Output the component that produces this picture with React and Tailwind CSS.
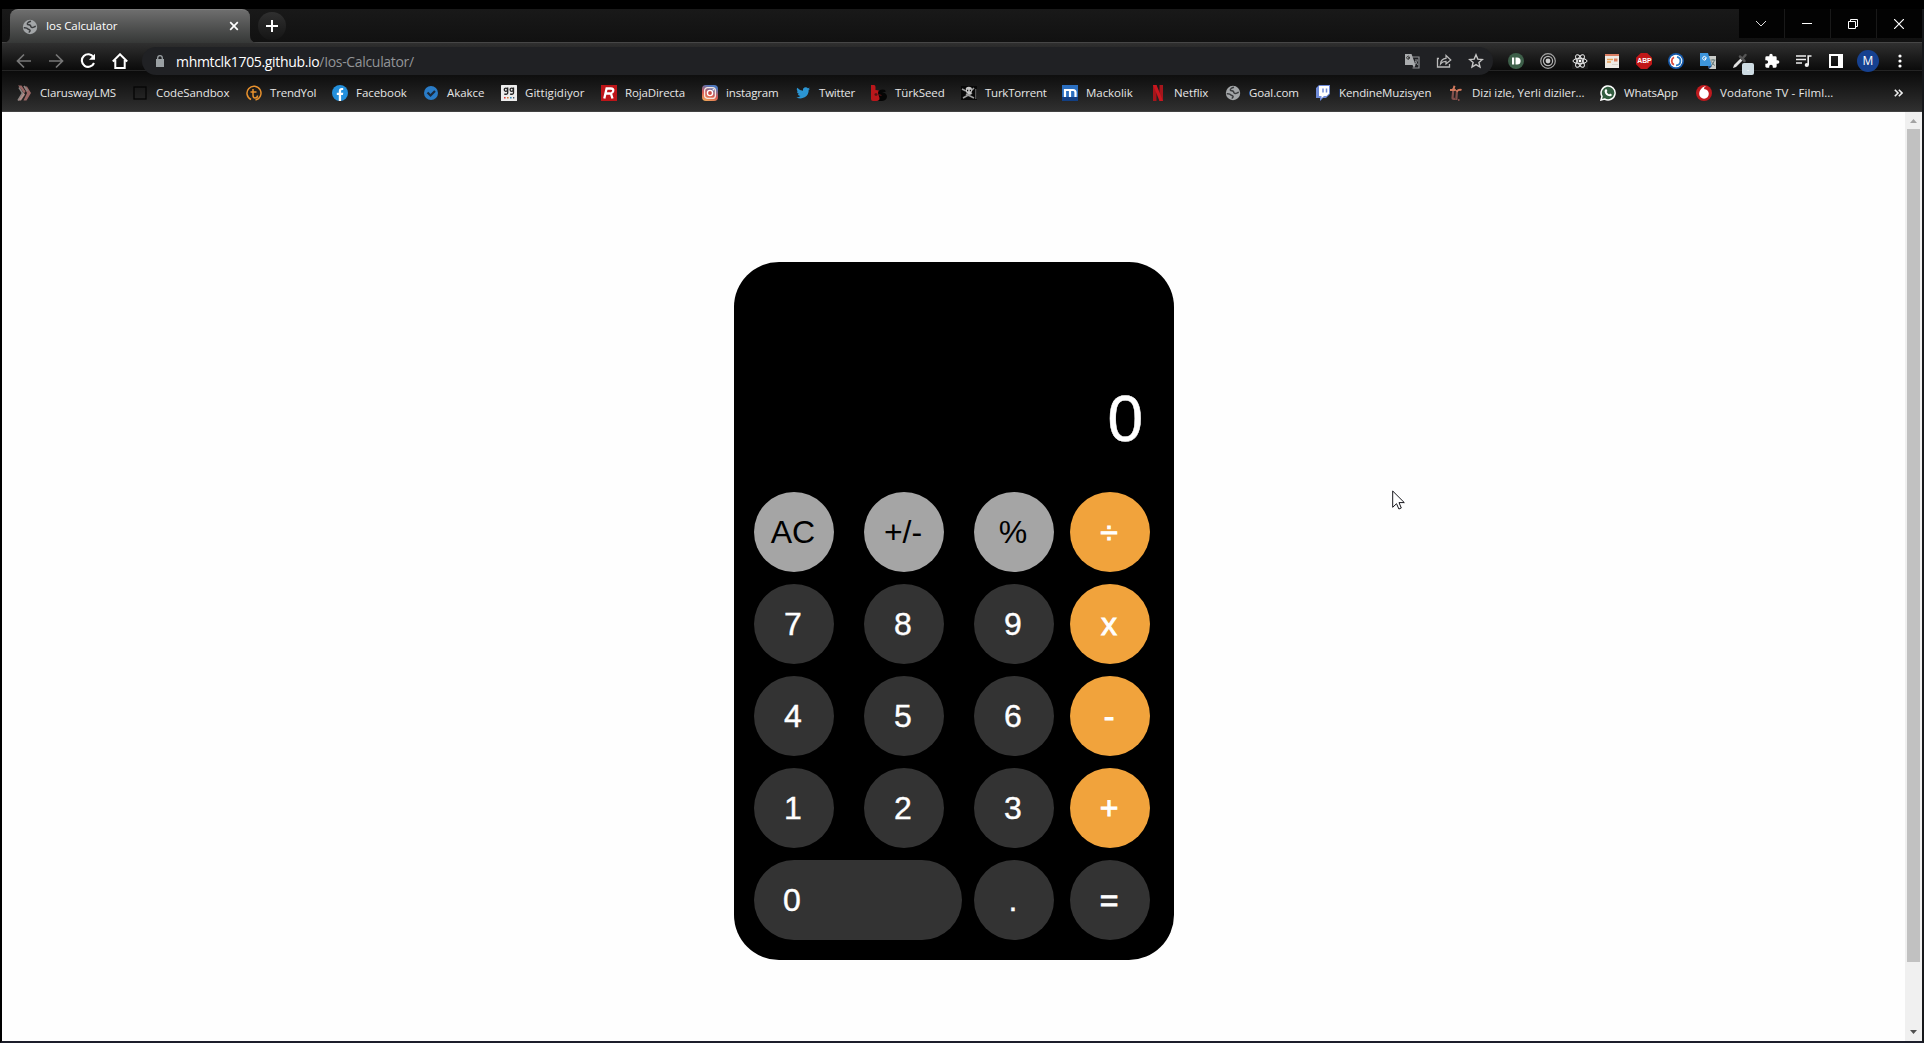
import React from "react";

const UI = "font-['Open_Sans','Noto_Sans',sans-serif]";

function Svg({ size = 16, box = 16, children, className = "" }) {
  return (
    <svg width={size} height={size} viewBox={`0 0 ${box} ${box}`} fill="none" className={`block shrink-0 ${className}`}>
      {children}
    </svg>
  );
}

const Globe = ({ size = 16 }) => (
  <Svg size={size}>
    <circle cx="8" cy="8" r="7.2" fill="#a3a6a8" />
    <path d="M1.800 8.800c2.500-.3 3.400.2 4.200 1.200.6.800 2 .4 2.100 1.600.1.900-.8 1-1 2M9 2.200C6.500 2.800 5 4 5.400 5.200c.4.900 2.300.4 3 1.300.7.900.2 1.800 1.700 2 1.500.2 2.200-.9 3.700-1.300" stroke="#3a3c3e" strokeWidth="1.500" />
  </Svg>
);

const icons = {
  clarus: (
    <Svg>
      <path d="M2 0.500h3.500l4 6-1.500 2L5 4z M7.500 1.500h3.500l4 6.500-4.500 7.500H7.500L11 8z" fill="#9a6664" />
      <path d="M2 15.500L6.500 8 3 2.500 M8 1l3.500 5" stroke="#8c8583" strokeWidth="1.500" />
      <path d="M2.500 15.500h2.500l4-6-1.500-2z" fill="#b18d89" />
    </Svg>
  ),
  box: <Svg><rect x="2" y="2" width="12" height="12" stroke="#050505" strokeWidth="1.300" /></Svg>,
  trend: (
    <Svg>
      <path d="M5 14.500a7 7 0 1 1 4.500.500" stroke="#e8912d" strokeWidth="1.500" />
      <path d="M7 4v6q0 3 2 3 2.500 0 2.500-2.500M4.500 7h6" stroke="#e8912d" strokeWidth="1.500" />
    </Svg>
  ),
  facebook: (
    <Svg>
      <circle cx="8" cy="8" r="8" fill="#2490dc" />
      <path d="M6.800 16V10H4.800V7.700h2V6.200c0-2.100 1.200-3.100 3-3.100.700 0 1.400.1 1.400.1v1.900h-.9c-.9 0-1.200.500-1.200 1.200v1.400h2.200L10.900 10H9.100v6z" fill="#fff" />
    </Svg>
  ),
  akakce: (
    <Svg>
      <circle cx="8" cy="8" r="7" fill="#2a7cc7" />
      <path d="M4.500 7.500l3 3 4.500-4.500" stroke="#1c2a3c" strokeWidth="2.200" />
    </Svg>
  ),
  gitti: (
    <Svg>
      <rect width="16" height="16" rx="0.500" fill="#ececec" />
      <g stroke="#222" strokeWidth="1.300">
        <circle cx="4.900" cy="4.700" r="1.600" /><path d="M6.700 2.500v5.500q0 1.700-3.500 1.100" />
        <circle cx="10.700" cy="4.700" r="1.600" /><path d="M12.500 2.500v5.500q0 1.700-3.500 1.100" />
      </g>
      <path d="M3 12h1.600v1.600H3z" fill="#d33" /><path d="M6 12h1.600v1.600H6z" fill="#c73" />
      <path d="M9 12h1.600v1.600H9z" fill="#38b" /><path d="M12 12h1.300v1.600H12z" fill="#456" />
    </Svg>
  ),
  roja: (
    <Svg>
      <rect width="16" height="16" fill="#bd1519" />
      <path d="M3.300 13.500L5.600 3.500h4.200q3 0 2.400 2.500-.5 2-2.300 2.300l1.600 5.200M5 8.500h4" stroke="#fff" strokeWidth="2.300" />
    </Svg>
  ),
  insta: (
    <Svg>
      <defs>
        <linearGradient id="ig" x1="0" y1="1" x2="0.400" y2="0">
          <stop offset="0" stopColor="#f3b75d" /><stop offset="0.500" stopColor="#d6564f" /><stop offset="1" stopColor="#4f78bd" />
        </linearGradient>
      </defs>
      <rect width="16" height="16" rx="4" fill="url(#ig)" />
      <rect x="2.600" y="2.600" width="10.800" height="10.800" rx="3" stroke="#f5e6e0" strokeWidth="1.300" />
      <circle cx="8" cy="8" r="2.600" fill="#cd4b45" stroke="#fff" strokeWidth="1.400" />
      <circle cx="11.300" cy="4.700" r="0.800" fill="#fff" />
    </Svg>
  ),
  twitter: (
    <Svg box={24}>
      <path d="M22.500 5.500a9 9 0 0 1-2.400.7 4.200 4.200 0 0 0 1.800-2.300 8 8 0 0 1-2.600 1A4.200 4.200 0 0 0 12 8.700 12 12 0 0 1 3.400 4.300a4.200 4.200 0 0 0 1.300 5.600 4 4 0 0 1-1.900-.5 4.200 4.200 0 0 0 3.300 4.100 4 4 0 0 1-1.900.1 4.200 4.200 0 0 0 3.900 2.900 8.400 8.400 0 0 1-6.100 1.700A12 12 0 0 0 20.500 7.600a8 8 0 0 0 2-2.100z" fill="#2b95d3" />
    </Svg>
  ),
  turkseed: (
    <Svg>
      <path d="M0 0h3q1.500 0 1.500 2v3q4 0 6 3v4q-1 3-5 4H2q-2 0-2-2z" fill="#ba171b" />
      <path d="M7 8q0-3.500 5-3.500 3 0 2.500 2.500l-3.500 0q4.500 1 5 4 0 4.500-5 5H7q2-1 1.500-3z" fill="#050505" />
      <path d="M3.500 9.500h3M5 8v3M7.500 9.500l3 1" stroke="#531214" strokeWidth="1.300" />
    </Svg>
  ),
  pirate: (
    <Svg>
      <rect width="16" height="14" y="1" fill="#080808" />
      <path d="M1 4l4 2M2 13l9-5M13 3L10 6M5 9l8 4" stroke="#9b9b9b" strokeWidth="1.600" />
      <path d="M4.800 3q3-2.500 6 0v3.500L9.800 9h-3L5 7z" fill="#c6c6c6" />
      <path d="M6 5.500h1.200M8.800 5.500H10" stroke="#111" strokeWidth="1.400" />
      <path d="M14.800 4v10" stroke="#777" />
    </Svg>
  ),
  mackolik: (
    <Svg>
      <rect width="16" height="16" fill="#2b6fc0" /><rect y="12" width="16" height="4" fill="#123f83" />
      <path d="M3 12V5h8q2.500 0 2.500 2.500V12M8 5v7" stroke="#fff" strokeWidth="2.200" />
    </Svg>
  ),
  netflix: (
    <Svg>
      <path d="M3 0h3.500v16H3zM9.500 0H13v16H9.500z" fill="#a5151b" />
      <path d="M3 0h3.500L13 16H9.500z" fill="#c9171f" />
    </Svg>
  ),
  globe: <Globe />,
  twitch: (
    <Svg>
      <path d="M1 3l3-3h11v9l-4 4H8l-3 3v-3H1z" fill="#6f8bd8" />
      <path d="M4 1h10v7.500L11.500 11H9l-2.500 2.200V11H4z" fill="#fff" />
      <path d="M8 3.500v4M11.500 3.500v4" stroke="#6f8bd8" strokeWidth="1.500" />
    </Svg>
  ),
  dizi: (
    <Svg>
      <path d="M5.500 3L4.500 13q0 1.200 2.500.800M9 5l-.700 10M10 15h1.500" stroke="#84504c" strokeWidth="2.200" />
      <path d="M6.500 .8L5.300 4.800M2 5h5.800M8.500 6.500q2.500-2.500 5-1.500" stroke="#d0785c" strokeWidth="2" />
    </Svg>
  ),
  whatsapp: (
    <Svg>
      <path d="M1 15l1-3.600A7 7 0 1 1 4.600 14z" fill="#335e40" stroke="#fff" strokeWidth="1.500" />
      <path d="M5.600 4.300l1 0 .8 1.800-.8 1q1 1.800 2.500 2.400l1-1 1.700.9q.1 1.800-1.800 1.900Q5 10.600 4.600 6.200q.1-1.400 1-1.900z" fill="#fff" />
    </Svg>
  ),
  vodafone: (
    <Svg>
      <circle cx="8" cy="8" r="8" fill="#c01a1e" />
      <path d="M10.300 1Q7.800 1.700 8 4c3 .4 4.800 2 4.800 4.800a4.800 4.800 0 0 1-9.600.2C3.200 5.500 6 1.500 10.300 1z" fill="#fff" />
    </Svg>
  ),
};

const bookmarks = [
  ["clarus", "ClaruswayLMS", "w-[116px]", "tracking-[-0.12px]"],
  ["box", "CodeSandbox", "w-[114px]", "tracking-[-0.1px]"],
  ["trend", "TrendYol", "w-[86px]", "tracking-[-0.2px]"],
  ["facebook", "Facebook", "w-[91px]", "tracking-[-0.05px]"],
  ["akakce", "Akakce", "w-[78px]", "tracking-[-0.05px]"],
  ["gitti", "Gittigidiyor", "w-[100px]", "tracking-[0.05px]"],
  ["roja", "RojaDirecta", "w-[101px]", "tracking-[-0.15px]"],
  ["insta", "instagram", "w-[93px]", "tracking-[-0.15px]"],
  ["twitter", "Twitter", "w-[76px]", "tracking-[-0.2px]"],
  ["turkseed", "TürkSeed", "w-[90px]", "tracking-[-0.1px]"],
  ["pirate", "TurkTorrent", "w-[101px]", "tracking-[-0.25px]"],
  ["mackolik", "Mackolik", "w-[88px]", "tracking-[-0.05px]"],
  ["netflix", "Netflix", "w-[75px]", "tracking-[-0.1px]"],
  ["globe", "Goal.com", "w-[90px]", "tracking-[-0.1px]"],
  ["twitch", "KendineMuzisyen", "w-[133px]", "tracking-[-0.14px]"],
  ["dizi", "Dizi izle, Yerli diziler...", "w-[152px]", "tracking-[-0.05px]"],
  ["whatsapp", "WhatsApp", "w-[96px]", "tracking-[-0.15px]"],
  ["vodafone", "Vodafone TV - Filml...", "w-[160px]", "tracking-[0.08px]"],
];

function WindowButton({ children }) {
  return <div className="flex w-[45px] items-center justify-center bg-[#030303] pr-px">{children}</div>;
}

function TabStrip() {
  return (
    <div className="flex h-[33px] items-start bg-linear-to-b from-[#191919] to-[#111111] pl-2">
      <div className="relative flex h-[34px] w-60 items-center rounded-t-[8px] border-t border-[#7c7c7c] bg-linear-to-b from-[#6e6e6e] to-[#363837] pr-[11px] pl-3">
        <svg width="8" height="8" className="absolute bottom-0 -left-2"><path d="M8 0v8H0Q8 8 8 0z" fill="#393939" /></svg>
        <svg width="8" height="8" className="absolute -right-2 bottom-0"><path d="M0 0v8h8Q0 8 0 0z" fill="#393939" /></svg>
        <Globe />
        <span className="ml-2 -mt-px grow text-[11.5px] tracking-[-0.1px] text-white">Ios Calculator</span>
        <svg width="10" height="10" viewBox="0 0 10 10" className="-mt-px"><path d="M1.200 1.200l7.600 7.600M8.800 1.200L1.200 8.800" stroke="#fff" strokeWidth="1.700" /></svg>
      </div>
      <div className="mt-[3px] ml-2 flex size-7 items-center justify-center rounded-full bg-linear-to-b from-[#303030] to-[#151515]">
        <svg width="12" height="12"><path d="M6 0v12M0 6h12" stroke="#fff" strokeWidth="2" /></svg>
      </div>
      <div className="ml-auto flex h-[29px] gap-px bg-[#191919]">
        <WindowButton><svg width="12" height="8"><path d="M1 1l5 5 5-5" stroke="#ddd" fill="none" /></svg></WindowButton>
        <WindowButton><svg width="10" height="1"><path d="M0 .5h10" stroke="#fff" /></svg></WindowButton>
        <WindowButton><svg width="10" height="10" fill="none" stroke="#fff"><path d="M0.500 2.500h7v7h-7zM2.500 2.500v-2h7v7h-2" /></svg></WindowButton>
        <WindowButton><svg width="10" height="10"><path d="M0 0l10 10M10 0L0 10" stroke="#fff" strokeWidth="1.200" /></svg></WindowButton>
      </div>
    </div>
  );
}

function Extensions() {
  return (
    <div className="flex items-center gap-4">
      <Svg><circle cx="8" cy="8" r="8" fill="#3d5f49" /><path d="M4 4.500h2.200v7H4zM7.500 4.500h1.600a3.500 3.500 0 0 1 0 7H7.500z" fill="#fff" /></Svg>
      <Svg><circle cx="8" cy="8" r="7.300" stroke="#a5a5a5" strokeWidth="1.200" /><circle cx="8" cy="8" r="4.600" stroke="#b5b5b5" strokeWidth="1.200" /><circle cx="8" cy="8" r="2.400" fill="#ccc" /></Svg>
      <Svg>
        <rect width="16" height="16" fill="#1b1b1b" />
        <g stroke="#ededed" strokeWidth="1"><ellipse cx="8" cy="8" rx="7" ry="2.700" /><ellipse cx="8" cy="8" rx="7" ry="2.700" transform="rotate(60 8 8)" /><ellipse cx="8" cy="8" rx="7" ry="2.700" transform="rotate(120 8 8)" /></g>
        <circle cx="8" cy="8" r="1.400" fill="#fff" />
      </Svg>
      <Svg><path d="M1 1h14v14H1z" fill="#eeeae5" /><path d="M1 1h14v2H1z" fill="#d97d62" /><path d="M3 6.500h6M3 9h4" stroke="#eba154" strokeWidth="1.300" /><path d="M10 5.500h3.500v3H10z" fill="#dc8060" /><path d="M8 11.500h6" stroke="#d8d2ca" /></Svg>
      <div className="flex size-4 items-center justify-center bg-[#c01718] font-['Liberation_Sans',sans-serif] text-[8px] leading-none font-bold text-white [clip-path:polygon(30%_0,70%_0,100%_30%,100%_70%,70%_100%,30%_100%,0_70%,0_30%)]">
        <span className="scale-x-[0.85]">ABP</span>
      </div>
      <Svg><circle cx="8" cy="8" r="8" fill="#1558a8" /><circle cx="8" cy="8" r="6.300" fill="#fff" /><path d="M6 4.200a4.300 4.300 0 0 0 0 7.600" stroke="#da4a3c" strokeWidth="1.800" /><path d="M9 3.800a4.300 4.300 0 0 1-1 8.500" stroke="#287bc5" strokeWidth="1.800" /></Svg>
      <Svg>
        <path d="M6 3h10v13H9z" fill="#c9cbc8" /><path d="M0 0h8l4 13H0z" fill="#3d95dc" /><path d="M8 13h4l-3 3z" fill="#1d4e91" />
        <path d="M7 5H5v1.200h1A1.800 1.800 0 1 1 5.700 4" stroke="#fff" /><path d="M10.500 7h5M13 6v1M14.500 7q-1 4-3.500 6M11.500 8.500q1 3 3.500 4" stroke="#697b7b" />
      </Svg>
      <div className="relative">
        <Svg><path d="M1 15l1-3 6.500-6.500L10.500 7.500 4 14z" fill="#e2e2e2" /><path d="M8 3.500l4.500 4.500M10.500 5.500l3-3.500" stroke="#555" strokeWidth="2.500" strokeLinecap="round" /></Svg>
        <div className="absolute top-[10px] left-[10px] flex size-3 items-center justify-center rounded-[2px] bg-[#cddbe2] text-[8px] leading-none text-white"><span>-</span></div>
      </div>
      <Svg box={24}><path d="M20.500 11H19V7a2 2 0 0 0-2-2h-4V3.500a2.500 2.500 0 0 0-5 0V5H4a2 2 0 0 0-2 2v3.800h1.500a2.700 2.700 0 0 1 0 5.400H2V20c0 1.100.9 2 2 2h3.800v-1.500a2.700 2.700 0 0 1 5.400 0V22H17a2 2 0 0 0 2-2v-4h1.500a2.500 2.500 0 0 0 0-5z" fill="#fff" /></Svg>
      <Svg><path d="M0 3h10M0 6.500h10M0 10h6" stroke="#eee" strokeWidth="1.600" /><path d="M12.200 12V3h3.300" stroke="#eee" strokeWidth="1.600" /><circle cx="10.800" cy="12" r="2.100" fill="#eee" /></Svg>
      <Svg><path d="M2 2h12v12H2z" stroke="#fff" strokeWidth="2" /><path d="M10 2h5v12h-5z" fill="#fff" /></Svg>
    </div>
  );
}

function Toolbar() {
  return (
    <div className="flex h-[28px] items-center border-t border-[#464646] bg-linear-to-b from-[#303030] to-[#0b0b0b]">
      <div className="mt-[9px] flex items-center gap-4 pl-[14px]">
        <Svg><path d="M15 8H2M8 1.500L1.500 8 8 14.500" stroke="#777" strokeWidth="1.700" /></Svg>
        <Svg><path d="M1 8h13M8 1.500L14.500 8 8 14.500" stroke="#777" strokeWidth="1.700" /></Svg>
        <Svg><path d="M13.500 4.200A6.300 6.300 0 1 0 14 10" stroke="#fff" strokeWidth="2.100" /><path d="M15 .8v6H9z" fill="#fff" /></Svg>
        <Svg><path d="M.8 8.500L8 1.300l7.200 7.200M3.300 7v8h9.400V7" stroke="#fff" strokeWidth="2" /></Svg>
      </div>
      <div className="relative z-10 mt-[9px] ml-[14px] flex h-7 w-[1351px] shrink-0 items-center rounded-full bg-[#202124] pr-[9px] pl-[14px]">
        <svg width="8" height="12" viewBox="0 0 8 12"><path d="M0 4h8v8H0z" fill="#9aa0a3" /><path d="M1.700 4V3a2.300 2.300 0 0 1 4.600 0v1" stroke="#9aa0a3" strokeWidth="1.300" fill="none" /></svg>
        <div className="ml-3 grow text-[14px] tracking-[-0.33px] whitespace-nowrap text-white">mhmtclk1705.github.io<span className="text-[#929497]">/Ios-Calculator/</span></div>
        <div className="flex items-center gap-4">
          <Svg><path d="M6.500 4H15v11H8.500" stroke="#8f9194" strokeWidth="1.200" /><path d="M1 1h6.500l4 11H1z" fill="#aaacae" /><path d="M6 4.500H4.500v1h1A1.500 1.500 0 1 1 5.500 4" stroke="#333" /><path d="M8.500 12l1.500 3 1.500-3z" fill="#aaacae" /><path d="M11 7h3M13.500 7.500L11 11.500M11 8l3 4" stroke="#8f9194" /></Svg>
          <Svg><path d="M3 5.500H1.500V14h12v-3" stroke="#bbb" strokeWidth="1.300" /><path d="M4.500 11q.5-5.500 5.500-5.700V2.500L14.800 7 10 11V8.300Q6.500 8.200 4.500 11z" stroke="#bbb" strokeWidth="1.200" /></Svg>
          <Svg><path d="M8 1.800l1.800 4.300 4.600.4-3.500 3 1.100 4.500L8 11.600 4 14l1.100-4.500-3.500-3 4.600-.4z" stroke="#c6c6c6" strokeWidth="1.400" /></Svg>
        </div>
      </div>
      <div className="relative z-10 mt-[9px] ml-[15px] flex items-center">
        <Extensions />
        <div className="ml-[13px] flex size-[22px] items-center justify-center rounded-full bg-[#164190] text-[12px] text-white">M</div>
        <svg width="4" height="14" className="ml-[19px]" fill="#fff"><circle cx="2" cy="2" r="1.600" /><circle cx="2" cy="7" r="1.600" /><circle cx="2" cy="12" r="1.600" /></svg>
      </div>
    </div>
  );
}

function BookmarksBar() {
  return (
    <div className="flex h-[42px] items-center border-t border-b border-t-[#242424] border-b-[#424242] bg-linear-to-b from-[#0b0b0b] to-[#303030] pt-1 pl-[14px]">
      {bookmarks.map(([icon, label, width, tracking]) => (
        <div key={label} className={`flex shrink-0 items-center gap-2 ${width}`}>
          {icons[icon]}
          <span className={`text-[11.5px] whitespace-nowrap text-[#e6e6e6] ${tracking}`}>{label}</span>
        </div>
      ))}
      <svg width="9" height="8" className="ml-auto mr-[19px]" fill="none" stroke="#eee" strokeWidth="1.600"><path d="M.8.8L4 4 .8 7.200M4.800.8L8 4 4.800 7.200" /></svg>
    </div>
  );
}

const rows = [
  ["AC", "+/-", "%", "÷"],
  ["7", "8", "9", "x"],
  ["4", "5", "6", "-"],
  ["1", "2", "3", "+"],
];

const DARK = "bg-[#333333] text-white [-webkit-text-stroke:0.4px_white]";
const LIGHT = "bg-[#a5a5a5] text-black";
const ORANGE = "bg-[#f1a33c] text-white [-webkit-text-stroke:0.9px_white]";

function Key({ label, tone = DARK, shape = "w-20 justify-center pr-[2px]", className = "" }) {
  return <button className={`flex h-20 items-center rounded-full text-[32px] leading-none ${shape} ${tone} ${className}`}>{label}</button>;
}

function Calculator() {
  return (
    <div className="mt-[150px] ml-[732px] h-[698px] w-[440px] rounded-[45px] bg-black px-5 pb-5 font-['Liberation_Sans',Arial,sans-serif]">
      <div className="flex h-[230px] items-end justify-end pr-[11px] pb-[37px] text-[64px] leading-[72px] text-white [-webkit-text-stroke:0.5px_white]">0</div>
      <div className="flex flex-col gap-3">
        {rows.map((row, i) => (
          <div key={i} className="flex">
            {row.slice(0, 3).map((label, j) => (
              <Key key={label} label={label} tone={i === 0 ? LIGHT : DARK} className={j < 2 ? "mr-[30px]" : "mr-4"} />
            ))}
            <Key label={row[3]} tone={ORANGE} />
          </div>
        ))}
        <div className="flex">
          <Key label="0" shape="w-52 pl-[29px]" className="mr-3" />
          <Key label="." className="mr-4" />
          <Key label="=" tone="bg-[#333333] text-white [-webkit-text-stroke:0.9px_white]" />
        </div>
      </div>
    </div>
  );
}

export default function App() {
  return (
    <div className={`flex h-[1043px] w-[1924px] flex-col overflow-hidden bg-black pt-[9px] ${UI}`}>
      <div className="flex grow flex-col border-r-2 border-b-2 border-l-2 border-r-[#15171a] border-b-[#1c1e2b] border-l-black">
        <TabStrip />
        <Toolbar />
        <BookmarksBar />
        <div className="flex grow bg-[#fefefe]">
          <div className="relative grow">
            <Calculator />
            <svg width="14" height="21" viewBox="0 0 14 21" className="absolute top-[378px] left-[1390px]">
              <path d="M.7 1v16.300l3.800-3.600 2.400 5.300 2.400-1-2.300-5.400h5.300z" fill="#fff" stroke="#16161c" />
            </svg>
          </div>
          <div className="flex w-[17px] flex-col items-center bg-[#f0f0f0]">
            <svg width="7" height="4" className="mt-[7px]"><path d="M0 4l3.500-4L7 4z" fill="#a3a3a3" /></svg>
            <div className="mt-[6px] mr-[1px] h-[833px] w-[13px] bg-[#c1c1c1]" />
            <svg width="7" height="4" className="mt-auto mb-[7px]"><path d="M0 0l3.500 4L7 0z" fill="#505050" /></svg>
          </div>
        </div>
      </div>
    </div>
  );
}
